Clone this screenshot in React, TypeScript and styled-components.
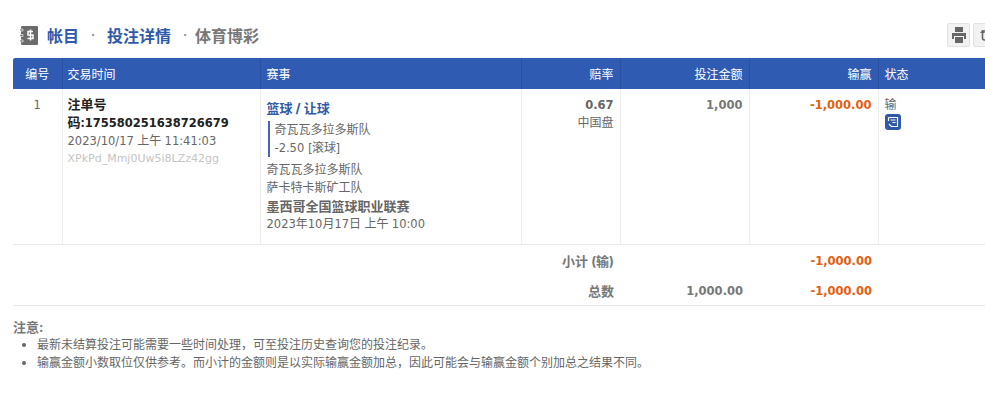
import React from "react";
import styled, { createGlobalStyle } from "styled-components";

const GlobalStyle = createGlobalStyle`
  html, body {
    margin: 0;
    padding: 0;
    background: #fff;
    overflow: hidden;
  }
  body {
    font-family: "Inter", "Noto Sans CJK SC", sans-serif;
    font-size: 12px;
    color: #666;
  }
`;

function LedgerIcon() {
  return (
    <svg width="18" height="19" viewBox="0 0 18 19">
      <path d="M2 0h15a1 1 0 0 1 1 1v17a1 1 0 0 1-1 1H2a1 1 0 0 1-1-1V1a1 1 0 0 1 1-1z" fill="#6b6b6b" />
      <path d="M0 3h3v2H0zM0 8.500h3v2H0zM0 14h3v2H0z" fill="#6b6b6b" stroke="#fff" strokeWidth="0.6" />
      <path d="M13 5.500H8V9h5v3.500H7.500M10.500 3.500v11" fill="none" stroke="#fff" strokeWidth="1.5" />
    </svg>
  );
}

function PrintIcon() {
  return (
    <svg width="14" height="16" viewBox="0 0 14 16">
      <path d="M3 0h8v5H3zM0 6h14v6h-2V9H2v3H0zM3 10h8v6H3z" fill="#666" />
    </svg>
  );
}

function RefreshIcon() {
  return (
    <svg width="14" height="16" viewBox="0 0 14 16">
      <path d="M11 4H4.500V11a2 2 0 0 0 2 2h5.500" fill="none" stroke="#666" strokeWidth="1.6" />
      <path d="M2 6l2.500-3L7 6z" fill="#666" />
    </svg>
  );
}

function NoteIcon() {
  return (
    <svg width="12" height="12" viewBox="0 0 12 12">
      <path d="M1.500 1.500h9v9H4M1.500 1.500v3.500M3.500 4h5M5.500 6.500h3M2 8l2.500 2.500" fill="none" stroke="#fff" strokeWidth="1.2" />
    </svg>
  );
}

export default function App() {
  return (
    <Page>
      <GlobalStyle />
      <TitleBar>
        <Crumbs>
          <LedgerIcon />
          <CrumbHome>帐目</CrumbHome>
          <Dot>·</Dot>
          <CrumbLink>投注详情</CrumbLink>
          <Dot>·</Dot>
          <CrumbCurrent>体育博彩</CrumbCurrent>
        </Crumbs>
        <Tools>
          <ToolButton><PrintIcon /></ToolButton>
          <ToolButton><RefreshIcon /></ToolButton>
        </Tools>
      </TitleBar>

      <BetTable>
        <colgroup>
          <Col $w={49} />
          <Col $w={198} />
          <Col $w={261} />
          <Col $w={99} />
          <Col $w={129} />
          <Col $w={129} />
          <Col $w={122} />
        </colgroup>
        <thead>
          <tr>
            <Th $align="center">编号</Th>
            <Th>交易时间</Th>
            <Th>赛事</Th>
            <Th $align="right">赔率</Th>
            <Th $align="right">投注金额</Th>
            <Th $align="right">输赢</Th>
            <Th>状态</Th>
          </tr>
        </thead>
        <tbody>
          <BetRow>
            <Td $align="center"><Latin>1</Latin></Td>
            <Td>
              <OrderNo>注单号<br />码:<Num $color="#222">175580251638726679</Num></OrderNo>
              <Line><Latin>2023/10/17</Latin> 上午 <Latin>11:41:03</Latin></Line>
              <Token>XPkPd_Mmj0Uw5i8LZz42gg</Token>
            </Td>
            <Td>
              <Market>篮球 / 让球</Market>
              <Pick>
                <Line>奇瓦瓦多拉多斯队</Line>
                <Line><Latin>-2.50</Latin> [滚球]</Line>
              </Pick>
              <Line>奇瓦瓦多拉多斯队</Line>
              <Line>萨卡特卡斯矿工队</Line>
              <League>墨西哥全国篮球职业联赛</League>
              <Line><Latin>2023</Latin>年<Latin>10</Latin>月<Latin>17</Latin>日 上午 <Latin>10:00</Latin></Line>
            </Td>
            <Td $align="right">
              <Num>0.67</Num>
              <Line>中国盘</Line>
            </Td>
            <Td $align="right"><Num $color="#777">1,000</Num></Td>
            <Td $align="right"><Num $color="#e2600f">-1,000.00</Num></Td>
            <Td>
              <Line>输</Line>
              <NoteBadge><NoteIcon /></NoteBadge>
            </Td>
          </BetRow>
          <SumRow>
            <SumCell colSpan={4}><SumLabel>小计 (输)</SumLabel></SumCell>
            <SumCell />
            <SumCell><Num $color="#e2600f">-1,000.00</Num></SumCell>
            <SumCell />
          </SumRow>
          <TotalRow>
            <SumCell colSpan={4}><SumLabel>总数</SumLabel></SumCell>
            <SumCell><Num $color="#777">1,000.00</Num></SumCell>
            <SumCell><Num $color="#e2600f">-1,000.00</Num></SumCell>
            <SumCell />
          </TotalRow>
        </tbody>
      </BetTable>

      <Notes>
        <NotesTitle>注意:</NotesTitle>
        <NotesList>
          <li>最新未结算投注可能需要一些时间处理，可至投注历史查询您的投注纪录。</li>
          <li>输赢金额小数取位仅供参考。而小计的金额则是以实际输赢金额加总，因此可能会与输赢金额个别加总之结果不同。</li>
        </NotesList>
      </Notes>
    </Page>
  );
}

const Page = styled.div`
  width: 985px;
  height: 409px;
  overflow: hidden;
  padding: 23px 0 0 13px;
  box-sizing: border-box;
`;

const TitleBar = styled.div`
  display: flex;
  justify-content: space-between;
  align-items: center;
  width: 983px;
  height: 24px;
  margin-bottom: 11px;
`;

const Crumbs = styled.div`
  display: flex;
  align-items: center;
  padding-left: 7px;
  font-size: 16px;
  font-weight: 700;
`;

const CrumbLink = styled.span`
  color: #2f5aa8;
`;

const CrumbHome = styled(CrumbLink)`
  margin-left: 9px;
`;

const Dot = styled.span`
  color: #888;
  font-weight: 400;
  width: 28px;
  text-align: center;
`;

const CrumbCurrent = styled.span`
  color: #777;
  margin-left: -4px;
`;

const Tools = styled.div`
  display: flex;
  gap: 3px;
`;

const ToolButton = styled.div`
  display: flex;
  align-items: center;
  justify-content: center;
  width: 23px;
  height: 24px;
  background: #f2f2f2;
  border: 1px solid #e2e2e2;
  border-radius: 2px;
  box-sizing: border-box;
`;

const BetTable = styled.table`
  width: 987px;
  table-layout: fixed;
  border-collapse: collapse;
`;

const Col = styled.col<{ $w: number }>`
  width: ${(p) => p.$w}px;
`;

const Th = styled.th<{ $align?: string }>`
  height: 31px;
  padding: 0 6px;
  background: #305bb2;
  color: #fff;
  font-size: 12px;
  font-weight: 400;
  text-align: ${(p) => p.$align || "left"};
  border-left: 1px solid #2a519f;
  &:first-child {
    border-left: 0;
    border-radius: 2px 0 0 0;
  }
  &:nth-child(2) {
    padding-left: 5px;
  }
`;

const BetRow = styled.tr`
  border-bottom: 1px solid #e8e8e8;
`;

const Td = styled.td<{ $align?: string }>`
  height: 148px;
  padding: 7px 6px 0;
  vertical-align: top;
  line-height: 18px;
  text-align: ${(p) => p.$align || "left"};
  border-left: 1px solid #ececec;
  &:first-child {
    border-left: 0;
  }
  &:nth-child(2) {
    padding-left: 5px;
  }
`;

const Line = styled.div``;

const Latin = styled.span`
  font-family: "DejaVu Sans", sans-serif;
  font-size: 11.5px;
`;

const Num = styled.span<{ $color?: string }>`
  font-family: "DejaVu Sans", sans-serif;
  font-size: 11.5px;
  font-weight: 700;
  color: ${(p) => p.$color || "#666"};
`;

const OrderNo = styled.div`
  color: #222;
  font-size: 13px;
  font-weight: 700;
  margin-top: -1px;
`;

const Token = styled.div`
  color: #c4c4c4;
  font-family: "DejaVu Sans", sans-serif;
  font-size: 11px;
`;

const Market = styled.div`
  color: #2f5aa8;
  font-size: 13px;
  font-weight: 700;
  margin-top: 3px;
`;

const Pick = styled.div`
  border-left: 2px solid #3f66b8;
  padding-left: 5px;
  margin: 4px 0 4px 1px;
`;

const League = styled.div`
  font-size: 13px;
  font-weight: 700;
`;

const NoteBadge = styled.span`
  display: flex;
  align-items: center;
  justify-content: center;
  width: 16px;
  height: 16px;
  background: #2f5aa8;
  border-radius: 3px;
`;

const SumRow = styled.tr`
  height: 31px;
`;

const TotalRow = styled(SumRow)`
  height: 30px;
  border-bottom: 1px solid #e8e8e8;
`;

const SumCell = styled.td`
  padding: 0 6px;
  text-align: right;
`;

const SumLabel = styled.span`
  font-size: 13px;
  font-weight: 700;
  color: #777;
`;

const Notes = styled.div`
  margin-top: 12px;
  line-height: 18px;
`;

const NotesTitle = styled.div`
  font-size: 13px;
  font-weight: 700;
  color: #777;
`;

const NotesList = styled.ul`
  margin: 0;
  padding: 0 0 0 24px;
  color: #666;
`;
